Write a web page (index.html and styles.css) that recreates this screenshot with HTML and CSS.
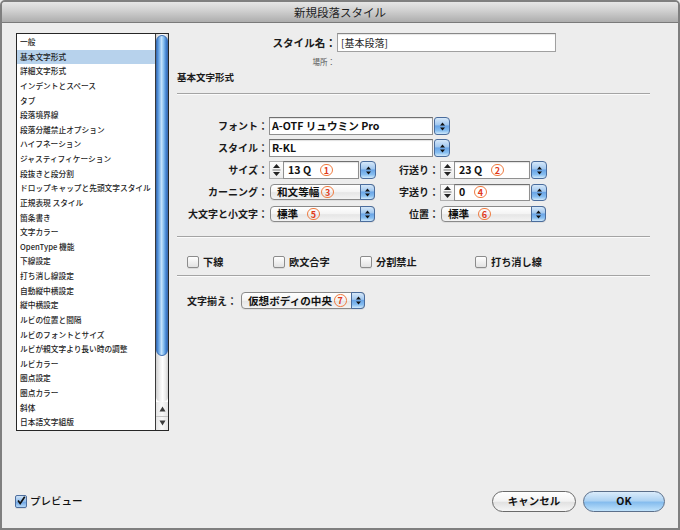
FILE: index.html
```html
<!DOCTYPE html>
<html lang="ja">
<head>
<meta charset="utf-8">
<title>新規段落スタイル</title>
<link rel="stylesheet" href="styles.css">
</head>
<body>
<div class="window">
  <div class="titlebar">新規段落スタイル</div>
  <div class="main">
    <div class="listbox">
      <ul class="items">
        <li>一般</li>
        <li class="sel">基本文字形式</li>
        <li>詳細文字形式</li>
        <li>インデントとスペース</li>
        <li>タブ</li>
        <li>段落境界線</li>
        <li>段落分離禁止オプション</li>
        <li>ハイフネーション</li>
        <li>ジャスティフィケーション</li>
        <li>段抜きと段分割</li>
        <li>ドロップキャップと先頭文字スタイル</li>
        <li>正規表現 スタイル</li>
        <li>箇条書き</li>
        <li>文字カラー</li>
        <li>OpenType 機能</li>
        <li>下線設定</li>
        <li>打ち消し線設定</li>
        <li>自動縦中横設定</li>
        <li>縦中横設定</li>
        <li>ルビの位置と間隔</li>
        <li>ルビのフォントとサイズ</li>
        <li>ルビが親文字より長い時の調整</li>
        <li>ルビカラー</li>
        <li>圏点設定</li>
        <li>圏点カラー</li>
        <li>斜体</li>
        <li>日本語文字組版</li>
      </ul>
      <div class="scrollbar">
        <div class="track"><div class="thumb"></div></div>
        <div class="arrows">
          <div class="arrow"><svg width="7" height="6" viewBox="0 0 7 6"><path d="M0.5 5.5 L3.5 0.5 L6.5 5.5 Z" fill="#3c3c3c"/></svg></div>
          <div class="arrow sepline"><svg width="7" height="6" viewBox="0 0 7 6"><path d="M0.5 0.5 L3.5 5.5 L6.5 0.5 Z" fill="#3c3c3c"/></svg></div>
        </div>
      </div>
    </div>

    <div class="panel">
      <div class="name-row">
        <span class="name-label">スタイル名：</span>
        <div class="textfield">[基本段落]</div>
      </div>
      <div class="place-row">場所：</div>
      <div class="heading">基本文字形式</div>
      <div class="sep"></div>

      <div class="form">
        <span class="lbl">フォント：</span>
        <div class="combo span3">
          <div class="field"><span class="val"><span>A-OTF リュウミン Pro</span></span></div>
          <div class="aqua"><svg width="7" height="11" viewBox="0 0 7 11"><path d="M1 4.5 L3.5 1.5 L6 4.5 Z M1 6.5 L3.5 9.5 L6 6.5 Z" fill="#111"/></svg></div>
        </div>

        <span class="lbl">スタイル：</span>
        <div class="combo span3">
          <div class="field"><span class="val"><span>R-KL</span></span></div>
          <div class="aqua"><svg width="7" height="11" viewBox="0 0 7 11"><path d="M1 4.5 L3.5 1.5 L6 4.5 Z M1 6.5 L3.5 9.5 L6 6.5 Z" fill="#111"/></svg></div>
        </div>

        <span class="lbl">サイズ：</span>
        <div class="combo step">
          <div class="stepper"><svg width="9" height="16" viewBox="0 0 9 16"><path d="M1 6 L4.5 2 L8 6 Z M1 10 L4.5 14 L8 10 Z" fill="#222"/><path d="M0.5 8 H8.5" stroke="#777" stroke-width="1"/></svg></div>
          <div class="field"><span class="val"><span>13 Q</span><span class="num">1</span></span></div>
          <div class="aqua"><svg width="7" height="11" viewBox="0 0 7 11"><path d="M1 4.5 L3.5 1.5 L6 4.5 Z M1 6.5 L3.5 9.5 L6 6.5 Z" fill="#111"/></svg></div>
        </div>
        <span class="lbl">行送り：</span>
        <div class="combo step">
          <div class="stepper"><svg width="9" height="16" viewBox="0 0 9 16"><path d="M1 6 L4.5 2 L8 6 Z M1 10 L4.5 14 L8 10 Z" fill="#222"/><path d="M0.5 8 H8.5" stroke="#777" stroke-width="1"/></svg></div>
          <div class="field"><span class="val"><span>23 Q</span><span class="num">2</span></span></div>
          <div class="aqua"><svg width="7" height="11" viewBox="0 0 7 11"><path d="M1 4.5 L3.5 1.5 L6 4.5 Z M1 6.5 L3.5 9.5 L6 6.5 Z" fill="#111"/></svg></div>
        </div>

        <span class="lbl">カーニング：</span>
        <div class="popup">
          <span class="val"><span>和文等幅</span><span class="num tight">3</span></span>
          <div class="aqua"><svg width="7" height="11" viewBox="0 0 7 11"><path d="M1 4.5 L3.5 1.5 L6 4.5 Z M1 6.5 L3.5 9.5 L6 6.5 Z" fill="#111"/></svg></div>
        </div>
        <span class="lbl">字送り：</span>
        <div class="combo step short">
          <div class="stepper"><svg width="9" height="16" viewBox="0 0 9 16"><path d="M1 6 L4.5 2 L8 6 Z M1 10 L4.5 14 L8 10 Z" fill="#222"/><path d="M0.5 8 H8.5" stroke="#777" stroke-width="1"/></svg></div>
          <div class="field"><span class="val"><span>0</span><span class="num">4</span></span></div>
          <div class="aqua"><svg width="7" height="11" viewBox="0 0 7 11"><path d="M1 4.5 L3.5 1.5 L6 4.5 Z M1 6.5 L3.5 9.5 L6 6.5 Z" fill="#111"/></svg></div>
        </div>

        <span class="lbl">大文字と小文字：</span>
        <div class="popup">
          <span class="val"><span>標準</span><span class="num">5</span></span>
          <div class="aqua"><svg width="7" height="11" viewBox="0 0 7 11"><path d="M1 4.5 L3.5 1.5 L6 4.5 Z M1 6.5 L3.5 9.5 L6 6.5 Z" fill="#111"/></svg></div>
        </div>
        <span class="lbl">位置：</span>
        <div class="popup">
          <span class="val"><span>標準</span><span class="num">6</span></span>
          <div class="aqua"><svg width="7" height="11" viewBox="0 0 7 11"><path d="M1 4.5 L3.5 1.5 L6 4.5 Z M1 6.5 L3.5 9.5 L6 6.5 Z" fill="#111"/></svg></div>
        </div>
      </div>

      <div class="sep sep-a"></div>

      <div class="checks">
        <label class="check w1"><span class="cb"></span><span>下線</span></label>
        <label class="check w2"><span class="cb"></span><span>欧文合字</span></label>
        <label class="check w3"><span class="cb"></span><span>分割禁止</span></label>
        <label class="check"><span class="cb"></span><span>打ち消し線</span></label>
      </div>

      <div class="sep sep-b"></div>

      <div class="align-row">
        <span class="lbl2">文字揃え：</span>
        <div class="popup wide">
          <span class="val"><span>仮想ボディの中央</span><span class="num tight">7</span></span>
          <div class="aqua"><svg width="7" height="11" viewBox="0 0 7 11"><path d="M1 4.5 L3.5 1.5 L6 4.5 Z M1 6.5 L3.5 9.5 L6 6.5 Z" fill="#111"/></svg></div>
        </div>
      </div>
    </div>
  </div>

  <div class="bottom">
    <label class="preview">
      <span class="cb checked"><svg width="12" height="12" viewBox="0 0 12 12"><path d="M2.5 5.5 L5 9 L10.5 0.8" stroke="#111" stroke-width="2" fill="none"/></svg></span>
      <span>プレビュー</span>
    </label>
    <div class="spacer"></div>
    <div class="btn cancel">キャンセル</div>
    <div class="btn ok">OK</div>
  </div>
</div>
</body>
</html>
```

FILE: styles.css
```css
* { box-sizing: border-box; }
html, body { margin: 0; padding: 0; }
body {
  width: 680px;
  height: 530px;
  background: #ececec;
  font-family: "Noto Sans CJK JP", "Noto Sans", sans-serif;
  color: #1a1a1a;
}
.window {
  width: 680px;
  height: 530px;
  border: 2px solid #7f7f7f;
  border-radius: 5px 5px 0 0;
  background: #ededed;
  display: flex;
  flex-direction: column;
  overflow: hidden;
}
.titlebar {
  flex: none;
  height: 21px;
  border-bottom: 1px solid #7a7a7a;
  background: linear-gradient(#e6e6e6, #cfcfcf 45%, #adadad);
  text-align: center;
  font-size: 11.5px;
  line-height: 20px;
  color: #1e1e1e;
}
.main {
  flex: 1;
  display: flex;
  padding: 10px 0 0 14px;
}

/* list */
.listbox {
  flex: none;
  width: 153px;
  height: 398px;
  border: 1px solid #262626;
  background: #fff;
  display: flex;
}
.items {
  list-style: none;
  margin: 0;
  padding: 1px 0 0;
  width: 138px;
  font-size: 7.7px;
  font-weight: 500;
}
.items li {
  height: 14.64px;
  line-height: 14.64px;
  padding-left: 3px;
  white-space: nowrap;
  color: #1e1e1e;
}
.items li.sel { background: #b7d2ec; }
.scrollbar {
  width: 13px;
  border-left: 1px solid #3a3a3a;
  display: flex;
  flex-direction: column;
}
.track {
  flex: 1;
  padding: 1px 0 0 0;
  background: linear-gradient(to right, #d0d0d0, #f2f2f2 35%, #ffffff 55%, #ececec 80%, #cfcfcf);
  border-radius: 0 0 5px 5px;
}
.thumb {
  height: 321px;
  border-radius: 6px;
  border: 1px solid #3d6fb3;
  background: linear-gradient(to right, #3e7cca 0%, #74aee9 22%, #c2e1fb 45%, #93c7f2 62%, #5191d9 85%, #356fbf 100%);
}
.arrows {
  flex: none;
  height: 28px;
  display: flex;
  flex-direction: column;
  background: linear-gradient(to right, #e4e4e4, #fafafa 50%, #e4e4e4);
}
.arrow {
  flex: 1;
  display: flex;
  align-items: center;
  justify-content: center;
}
.arrow.sepline { border-top: 1px solid #c4c4c4; }

/* right panel */
.panel {
  flex: none;
  width: 488px;
  margin-left: 8px;
  display: flex;
  flex-direction: column;
}
.name-row {
  display: flex;
  height: 19px;
  align-items: center;
}
.name-label {
  width: 160px;
  padding-right: 1px;
  text-align: right;
  font-size: 10.6px;
  font-weight: 700;
  line-height: 14px;
  white-space: nowrap;
}
.textfield {
  width: 219px;
  height: 19px;
  border: 1px solid #a0a0a0;
  border-top-color: #888;
  box-shadow: inset 0 1px 1px rgba(0,0,0,0.1);
  background: #fff;
  font-size: 10px;
  line-height: 17px;
  padding-left: 3px;
  color: #222;
}
.place-row {
  margin-top: 5px;
  height: 10px;
  width: 158px;
  text-align: right;
  font-size: 7.5px;
  line-height: 10px;
  color: #555;
}
.heading {
  margin-top: 4px;
  height: 12px;
  font-size: 9.5px;
  font-weight: 700;
  line-height: 12px;
}
.sep {
  width: 473px;
  height: 2px;
  border-top: 1px solid #a4a4a4;
  border-bottom: 1px solid #fbfbfb;
  margin-top: 10px;
}
.sep-a { margin-top: 11px; }
.sep-b { margin-top: 6px; }

.form {
  margin-top: 20px;
  display: grid;
  grid-template-columns: 92px 107px 64px 105px;
  grid-auto-rows: 22px;
  align-items: center;
}
.lbl {
  text-align: right;
  padding-right: 1px;
  font-size: 10px;
  font-weight: 700;
  line-height: 14px;
  white-space: nowrap;
}
.span3 { grid-column: 2 / span 3; width: 181px; }

.val {
  flex: 1;
  display: flex;
  align-items: center;
  font-size: 10.6px;
  font-weight: 700;
  line-height: 14px;
  white-space: nowrap;
  color: #111;
}
.num {
  flex: none;
  display: inline-flex;
  align-items: center;
  justify-content: center;
  width: 12.5px;
  height: 12.5px;
  margin-left: 9px;
  border: 1.3px solid #ef7b40;
  border-radius: 50%;
  background: #fff;
  color: #e2381a;
  font-size: 9px;
  font-weight: 700;
  line-height: 1;
}
.num.tight { margin-left: 2px; }

.combo {
  display: flex;
  align-items: center;
  height: 18px;
}
.combo.step { width: 107px; }
.combo.short { height: 17px; }
.field {
  flex: 1;
  height: 100%;
  display: flex;
  align-items: center;
  padding-left: 2px;
  background: #fff;
  border: 1px solid #909090;
  border-top-color: #707070;
  box-shadow: inset 0 1px 1px rgba(0,0,0,0.12);
}
.step .field { padding-left: 4px; }
.stepper {
  flex: none;
  width: 14px;
  height: 100%;
  display: flex;
  align-items: center;
  justify-content: center;
  background: linear-gradient(#fdfdfd, #ececec);
  border: 1px solid #b0b0b0;
  border-right: none;
}
.aqua {
  flex: none;
  width: 16px;
  height: 100%;
  margin-left: 1px;
  display: flex;
  align-items: center;
  justify-content: center;
  border: 1px solid #4a6c9c;
  border-radius: 3px 4px 4px 3px;
  background: linear-gradient(#d6e8f9, #a2c8ef 42%, #6aa5e6 50%, #86bdf0 78%, #d0e9fb);
}
.popup {
  display: flex;
  align-items: center;
  width: 105px;
  height: 16px;
  margin-left: 1px;
  border: 1px solid #8a8a8a;
  border-radius: 4px;
  background: linear-gradient(#ffffff, #f4f4f4 48%, #e6e6e6 55%, #f3f3f3);
  box-shadow: 0 1px 0 rgba(0,0,0,0.06);
}
.popup .val { padding-left: 6px; }
.popup .num { background: transparent; }
.popup .aqua {
  width: 15px;
  height: 16px;
  margin: -1px -1px -1px 0;
  border-radius: 0 4px 4px 0;
}
.popup.wide { width: 124px; height: 17px; margin-left: 2px; }
.popup.wide .aqua { height: 17px; width: 14px; }

/* checkboxes */
.checks {
  margin-top: 17px;
  height: 14px;
  display: flex;
  align-items: center;
  padding-left: 10px;
}
.check {
  display: flex;
  align-items: center;
  font-size: 10.2px;
  font-weight: 700;
  line-height: 14px;
  white-space: nowrap;
}
.check.w1 { width: 86px; }
.check.w2 { width: 87px; }
.check.w3 { width: 115px; }
.cb {
  flex: none;
  width: 12px;
  height: 12px;
  margin-right: 4px;
  border: 1px solid #8c8c8c;
  border-radius: 2px;
  background: linear-gradient(#ffffff, #f0f0f0 50%, #e2e2e2);
  box-shadow: 0 1px 0 rgba(0,0,0,0.08);
}
.align-row {
  margin-top: 15px;
  height: 17px;
  display: flex;
  align-items: center;
  padding-left: 10px;
}
.lbl2 {
  width: 52px;
  font-size: 10px;
  font-weight: 700;
  line-height: 14px;
  white-space: nowrap;
}

/* bottom bar */
.bottom {
  flex: none;
  height: 47px;
  display: flex;
  align-items: center;
  padding: 0 13px 7px 13px;
}
.preview {
  display: flex;
  align-items: center;
  font-size: 10.5px;
  font-weight: 500;
  line-height: 14px;
  color: #111;
}
.cb.checked {
  width: 12px;
  height: 13px;
  margin-right: 3px;
  border-color: #4d6e9e;
  background: linear-gradient(#cfe3f7, #8fbbea 50%, #6ea5e4 55%, #b5d8f7);
  display: flex;
  align-items: center;
  justify-content: center;
  overflow: visible;
}
.spacer { flex: 1; }
.btn {
  height: 21px;
  border: 1px solid #6a6a6a;
  border-radius: 11px;
  display: flex;
  align-items: center;
  justify-content: center;
  font-size: 10.5px;
  font-weight: 700;
  line-height: 14px;
  color: #111;
}
.cancel {
  width: 84px;
  background: linear-gradient(#ffffff, #f3f3f3 48%, #e2e2e2 55%, #f6f6f6);
}
.ok {
  width: 82px;
  margin-left: 7px;
  border-color: #5b6f8a;
  background: linear-gradient(#dbecfb, #aed3f3 45%, #86bdee 55%, #bfe2fb);
}
```
